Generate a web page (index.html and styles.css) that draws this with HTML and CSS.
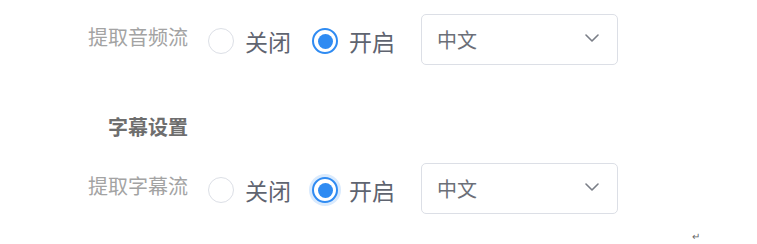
FILE: index.html
```html
<!DOCTYPE html>
<html lang="zh-CN">
<head>
<meta charset="utf-8">
<link rel="stylesheet" href="styles.css">
</head>
<body>
<div class="page">
  <div class="row">
    <div class="label">提取音频流</div>
    <div class="radios">
      <label class="radio"><span class="circle"></span><span class="txt">关闭</span></label>
      <label class="radio checked"><span class="circle"></span><span class="txt">开启</span></label>
    </div>
    <div class="select"><span class="val">中文</span><svg class="chev" width="14" height="8" viewBox="0 0 14 8"><path d="M1 1 L7 7 L13 1" fill="none" stroke="#7a7e87" stroke-width="1.6" stroke-linecap="round" stroke-linejoin="round"/></svg></div>
  </div>
  <div class="section"><div class="section-title">字幕设置</div></div>
  <div class="row row2">
    <div class="label">提取字幕流</div>
    <div class="radios">
      <label class="radio"><span class="circle"></span><span class="txt">关闭</span></label>
      <label class="radio checked focus"><span class="circle"></span><span class="txt">开启</span></label>
    </div>
    <div class="select"><span class="val">中文</span><svg class="chev" width="14" height="8" viewBox="0 0 14 8"><path d="M1 1 L7 7 L13 1" fill="none" stroke="#7a7e87" stroke-width="1.6" stroke-linecap="round" stroke-linejoin="round"/></svg></div>
  </div>
  <div class="mark">↵</div>
</div>
</body>
</html>
```

FILE: styles.css
```css
* { box-sizing: border-box; }
html, body {
  margin: 0;
  padding: 0;
  background: #ffffff;
}
body {
  font-family: "Noto Sans CJK SC", "Noto Sans", sans-serif;
}
.page {
  padding-top: 14px;
}
.row {
  display: flex;
  align-items: center;
  height: 51px;
}
.label {
  width: 188px;
  text-align: right;
  font-size: 20px;
  line-height: 20px;
  color: #a3a3a3;
  margin-bottom: 5px;
}
.radios {
  display: flex;
  align-items: center;
  margin-left: 20px;
  margin-top: 3px;
}
.radio {
  display: flex;
  align-items: center;
}
.radio + .radio {
  margin-left: 21px;
}
.circle {
  width: 26px;
  height: 26px;
  border-radius: 50%;
  border: 1px solid #dcdfe6;
  background: #fff;
  display: flex;
  align-items: center;
  justify-content: center;
}
.checked .circle {
  border: 2px solid #2f8bf2;
}
.checked .circle::after {
  content: "";
  width: 15px;
  height: 15px;
  border-radius: 50%;
  background: #2f8bf2;
}
.focus .circle {
  box-shadow: 0 0 0 3px rgba(47, 139, 242, 0.18);
}
.txt {
  margin-left: 11px;
  font-size: 23px;
  line-height: 23px;
  color: #5f6470;
}
.select {
  margin-left: 26px;
  width: 197px;
  height: 51px;
  border: 1px solid #dcdfe6;
  border-radius: 5px;
  display: flex;
  align-items: center;
  justify-content: space-between;
  padding: 0 18px 0 15px;
}
.val {
  font-size: 20px;
  line-height: 20px;
  color: #6b6f78;
}
.chev {
  display: block;
  margin-top: -3px;
}
.section {
  margin-top: 52px;
}
.section-title {
  width: 188px;
  text-align: right;
  font-size: 20px;
  line-height: 20px;
  font-weight: bold;
  color: #6e6e6e;
}
.row2 {
  margin-top: 26px;
}
.mark {
  margin-top: 17px;
  padding-left: 692px;
  font-size: 10px;
  line-height: 10px;
  color: #666;
}
```
